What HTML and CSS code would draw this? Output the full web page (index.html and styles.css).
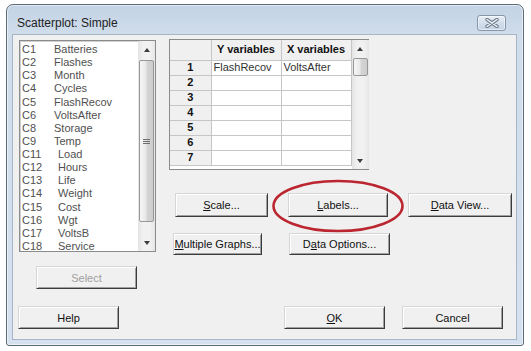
FILE: index.html
```html
<!DOCTYPE html>
<html>
<head>
<meta charset="utf-8">
<title>Scatterplot: Simple</title>
<link rel="stylesheet" href="styles.css">
</head>
<body>
<div class="window">
  <div class="titlebar">
    <span class="title">Scatterplot: Simple</span>
    <div class="close">
      <svg width="14" height="10" viewBox="0 0 14 10">
        <path d="M2 1.5 L12 8.5 M12 1.5 L2 8.5" stroke="#6c7a8a" stroke-width="3.4" stroke-linecap="round"/>
        <path d="M2 1.5 L12 8.5 M12 1.5 L2 8.5" stroke="#f3f6fa" stroke-width="1.5" stroke-linecap="round"/>
      </svg>
    </div>
  </div>
  <div class="client">
    <div class="main">
      <div class="leftcol">
        <div class="listbox">
          <ul class="items">
            <li><span class="code">C1</span>Batteries</li>
            <li><span class="code">C2</span>Flashes</li>
            <li><span class="code">C3</span>Month</li>
            <li><span class="code">C4</span>Cycles</li>
            <li><span class="code">C5</span>FlashRecov</li>
            <li><span class="code">C6</span>VoltsAfter</li>
            <li><span class="code">C8</span>Storage</li>
            <li><span class="code">C9</span>Temp</li>
            <li><span class="code wide">C11</span>Load</li>
            <li><span class="code wide">C12</span>Hours</li>
            <li><span class="code wide">C13</span>Life</li>
            <li><span class="code wide">C14</span>Weight</li>
            <li><span class="code wide">C15</span>Cost</li>
            <li><span class="code wide">C16</span>Wgt</li>
            <li><span class="code wide">C17</span>VoltsB</li>
            <li><span class="code wide">C18</span>Service</li>
          </ul>
          <div class="vscroll list-scroll">
            <div class="arrow up"></div>
            <div class="track">
              <div class="thumb big"><span class="grip"></span></div>
            </div>
            <div class="arrow down"></div>
          </div>
        </div>
        <div class="btn select">Select</div>
      </div>
      <div class="rightcol">
        <div class="grid">
          <table class="sheet">
            <tr class="hrow"><th class="corner"></th><th>Y variables</th><th>X variables</th></tr>
            <tr><th>1</th><td>FlashRecov</td><td>VoltsAfter</td></tr>
            <tr><th>2</th><td></td><td></td></tr>
            <tr><th>3</th><td></td><td></td></tr>
            <tr><th>4</th><td></td><td></td></tr>
            <tr><th>5</th><td></td><td></td></tr>
            <tr><th>6</th><td></td><td></td></tr>
            <tr><th>7</th><td></td><td></td></tr>
          </table>
          <div class="vscroll grid-scroll">
            <div class="arrow up"></div>
            <div class="track">
              <div class="thumb small"></div>
            </div>
            <div class="arrow down"></div>
          </div>
        </div>
        <div class="btnrow row1">
          <div class="btn scale"><u>S</u>cale...</div>
          <div class="btn labels"><u>L</u>abels...</div>
          <div class="btn dataview"><u>D</u>ata View...</div>
        </div>
        <div class="btnrow row2">
          <div class="btn multi"><u>M</u>ultiple Graphs...</div>
          <div class="btn dataopt">D<u>a</u>ta Options...</div>
        </div>
      </div>
    </div>
    <div class="bottom">
      <div class="btn help">Help</div>
      <div class="btn ok"><u>O</u>K</div>
      <div class="btn cancel">Cancel</div>
    </div>
    <svg class="highlight" width="136" height="56" viewBox="0 0 136 56">
      <ellipse cx="68" cy="28" rx="64.5" ry="25" fill="none" stroke="#bb2630" stroke-width="2.6"/>
    </svg>
  </div>
</div>
</body>
</html>
```
FILE: styles.css
```css
* { box-sizing: border-box; }
html, body { margin: 0; padding: 0; background: #ffffff; }
body {
  width: 531px;
  height: 351px;
  overflow: hidden;
  font-family: "Liberation Sans", Arial, sans-serif;
  font-size: 11px;
  color: #1a1a1a;
}
.window {
  margin: 4px 0 0 6px;
  width: 518px;
  height: 342px;
  border: 1px solid #5d6a79;
  border-radius: 7px 7px 3px 3px;
  background: linear-gradient(to bottom, #c3d3e5 0px, #cfdcea 28px, #d5e1ee 100%);
  box-shadow: inset 0 0 0 1px rgba(255,255,255,0.55);
  padding: 0 6px 5px 5px;
  display: flex;
  flex-direction: column;
}
.titlebar {
  height: 29px;
  display: flex;
  align-items: flex-start;
  justify-content: space-between;
  flex: none;
}
.title {
  font-family: "Liberation Sans", Arial, sans-serif;
  font-size: 12px;
  line-height: 14px;
  color: #222;
  padding: 11px 0 0 5px;
}
.close {
  margin: 10px 11px 0 0;
  width: 29px;
  height: 16px;
  border: 1px solid #8797aa;
  border-radius: 3px;
  background: linear-gradient(to bottom, #e9eff6, #d2deea 50%, #c6d4e3);
  box-shadow: inset 0 0 0 1px rgba(255,255,255,0.5);
  display: flex;
  align-items: center;
  justify-content: center;
}
.client {
  position: relative;
  flex: 1;
  background: #f0f0f0;
  border: 1px solid #a6b6c8;
  display: flex;
  flex-direction: column;
}
.main { display: flex; }
.leftcol { margin: 5px 0 0 6px; display: flex; flex-direction: column; }
.listbox {
  width: 137px;
  height: 212px;
  background: #fff;
  border: 1px solid #8b8b8b;
  box-shadow: inset 1px 1px 0 #d0d0d0;
  display: flex;
}
.items {
  list-style: none;
  margin: 0;
  padding: 2px 0 0 2px;
  flex: 1;
  color: #505050;
}
.items li { height: 13.14px; line-height: 13px; white-space: nowrap; }
.code { display: inline-block; width: 32px; }
.code.wide { width: 36px; }

.vscroll {
  width: 17px;
  display: flex;
  flex-direction: column;
  background: linear-gradient(to right, #e4e4e4, #f1f1f1 30%, #f1f1f1 70%, #e6e6e6);
  flex: none;
}
.arrow {
  height: 17px;
  flex: none;
  display: flex;
  align-items: center;
  justify-content: center;
}
.arrow::after {
  content: "";
  width: 0;
  height: 0;
  border-left: 3.5px solid transparent;
  border-right: 3.5px solid transparent;
}
.arrow.up::after { border-bottom: 4px solid #3c3c3c; }
.arrow.down::after { border-top: 4px solid #3c3c3c; }
.track { flex: 1; position: relative; }
.thumb {
  margin: 0 1px;
  border: 1px solid #979797;
  border-radius: 2px;
  background: linear-gradient(to right, #f6f6f6, #e8e8e8 45%, #d4d4d4 55%, #cdcdcd);
  display: flex;
  align-items: center;
  justify-content: center;
}
.thumb.big { margin-top: 2px; height: 162px; }
.thumb.small { margin-top: 1px; height: 18px; }
.grip {
  width: 7px;
  height: 5px;
  border-top: 1px solid #6e6e6e;
  border-bottom: 1px solid #6e6e6e;
  position: relative;
}
.grip::after {
  content: "";
  position: absolute;
  left: 0; right: 0; top: 1px;
  border-top: 1px solid #6e6e6e;
}

.rightcol { margin: 4px 0 0 13px; display: flex; flex-direction: column; }
.grid {
  width: 200px;
  height: 131px;
  background: #fff;
  border: 1px solid #8b8b8b;
  display: flex;
}
.sheet {
  border-collapse: collapse;
  table-layout: fixed;
  width: 181px;
  align-self: flex-start;
}
.sheet th, .sheet td {
  border-right: 1px solid #c6c6c6;
  border-bottom: 1px solid #c6c6c6;
  height: 15px;
  padding: 0;
  line-height: 13px;
  white-space: nowrap;
  overflow: hidden;
}
.sheet th {
  background: #f0f0f0;
  font-weight: bold;
  color: #111;
  text-align: center;
  width: 41px;
}
.sheet .hrow th { height: 20px; width: 70px; }
.sheet .hrow th.corner { width: 41px; }
.sheet td { color: #333; padding-left: 2px; width: 70px; }
.btnrow { display: flex; }
.row1 { margin: 23px 0 0 6px; gap: 20px; }
.row2 { margin: 16px 0 0 4px; gap: 27px; }

.btn {
  height: 23px;
  display: flex;
  align-items: center;
  justify-content: center;
  background: #f0f0f0;
  border: 1px solid;
  border-color: #d6d6d6 #3c3c3c #3c3c3c #d6d6d6;
  box-shadow: inset 1px 1px 0 #ffffff, inset -1px -1px 0 #a0a0a0;
  color: #111;
  white-space: nowrap;
}
.btn u { text-decoration: underline; text-underline-offset: 1px; }
.scale { width: 93px; height: 24px; }
.labels { width: 100px; height: 24px; }
.dataview { width: 104px; height: 24px; }
.multi { width: 89px; height: 22px; }
.dataopt { width: 101px; height: 22px; }
.select {
  width: 101px;
  margin: 14px 0 0 17px;
  color: #a0a0a0;
}
.bottom {
  display: flex;
  margin-top: 17px;
  padding: 0 13px 0 5px;
}
.help { width: 101px; }
.ok { width: 101px; margin-left: auto; }
.cancel { width: 101px; margin-left: 17px; }
.highlight {
  position: absolute;
  left: 256.5px;
  top: 143px;
}
```
